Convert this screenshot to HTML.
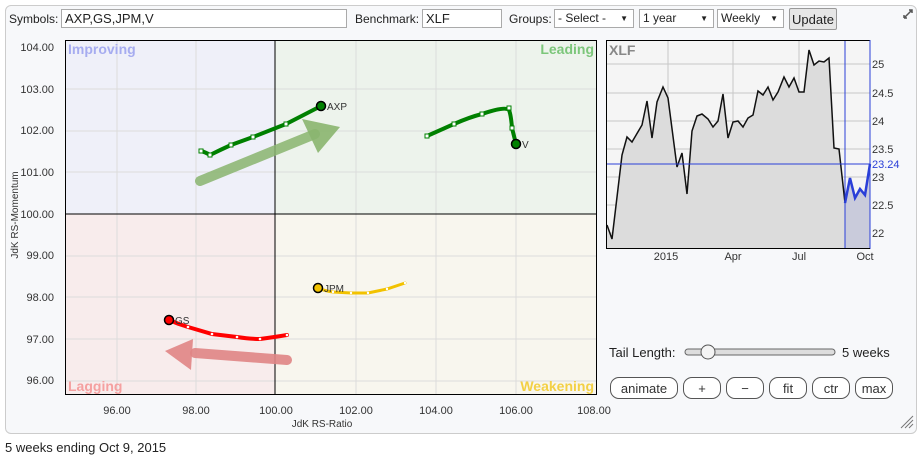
<!DOCTYPE html>
<html><head><meta charset="utf-8"><style>
body{margin:0;width:923px;height:456px;background:#fff;font-family:"Liberation Sans",Arial,sans-serif;font-size:12px;color:#222;position:relative;overflow:hidden}
.box{position:absolute;left:5px;top:5px;width:910px;height:427px;border:1px solid #ccc;border-radius:6px;background:#f7f8fa}
.a{position:absolute}
.inp{position:absolute;height:19px;border:1px solid #aaa;background:#fff;font-size:13px;line-height:17px;padding-left:3px;box-sizing:border-box}
.sel{position:absolute;height:19px;border:1px solid #aaa;background:#fff;font-size:12px;line-height:17px;padding-left:3px;box-sizing:border-box}
.sel:after{content:"▼";position:absolute;right:5px;font-size:8px}
.btn{position:absolute;top:377px;height:22px;border:1px solid #555;border-radius:9px;background:#fff;font-size:13px;text-align:center;line-height:21px;box-sizing:border-box;color:#333}
</style></head><body>
<div class="box"></div>
<div class="a" style="left:9px;top:12px;font-size:12px">Symbols:</div>
<div class="inp" style="left:61px;top:9px;width:286px">AXP,GS,JPM,V</div>
<div class="a" style="left:355px;top:12px;font-size:12px">Benchmark:</div>
<div class="inp" style="left:422px;top:9px;width:80px">XLF</div>
<div class="a" style="left:509px;top:12px;font-size:12px">Groups:</div>
<div class="sel" style="left:554px;top:9px;width:80px">- Select -</div>
<div class="sel" style="left:639px;top:9px;width:75px">1 year</div>
<div class="sel" style="left:717px;top:9px;width:67px">Weekly</div>
<div class="a" style="left:789px;top:8px;width:48px;height:22px;border:1px solid #999;background:#e6e6e6;font-size:13px;line-height:21px;text-align:center;box-sizing:border-box;border-radius:2px">Update</div>
<svg class="a" style="left:0;top:0" width="923" height="456">
<path d="M904 18l8-8M909 10h3v3M904 18v-3M904 18h3" stroke="#555" stroke-width="1.5" fill="none"/>
<g font-size="11" fill="#333" text-anchor="end">
<text x="54" y="51">104.00</text><text x="54" y="93">103.00</text><text x="54" y="134">102.00</text><text x="54" y="176">101.00</text><text x="54" y="218">100.00</text><text x="54" y="259">99.00</text><text x="54" y="301">98.00</text><text x="54" y="343">97.00</text><text x="54" y="384">96.00</text>
</g>
<g font-size="11" fill="#333" text-anchor="middle">
<text x="117" y="414">96.00</text><text x="196" y="414">98.00</text><text x="276" y="414">100.00</text><text x="356" y="414">102.00</text><text x="436" y="414">104.00</text><text x="516" y="414">106.00</text><text x="594" y="414">108.00</text>
<text x="322" y="427" font-size="10">JdK RS-Ratio</text>
</g>
<text transform="translate(18,215) rotate(-90)" font-size="10" fill="#333" text-anchor="middle">JdK RS-Momentum</text>
<rect x="65" y="40" width="210" height="174" fill="#eff0f9"/>
<rect x="275" y="40" width="322" height="174" fill="#edf3ec"/>
<rect x="65" y="214" width="210" height="181" fill="#f8ecec"/>
<rect x="275" y="214" width="322" height="181" fill="#f8f6ee"/>
<g stroke="#dcdcdc" stroke-width="1">
<path d="M117 40v355M196 40v355M356 40v355M436 40v355M516 40v355M65 89h532M65 131h532M65 172h532M65 256h532M65 297h532M65 339h532M65 381h532"/>
</g>
<rect x="65.5" y="40.5" width="531" height="354" fill="none" stroke="#000"/>
<path d="M275 40v355M65 214h532" stroke="#000"/>
<g font-size="14" font-weight="bold">
<text x="68" y="54" fill="#a6acf0">Improving</text>
<text x="594" y="54" fill="#7cc67a" text-anchor="end">Leading</text>
<text x="68" y="391" fill="#f5a0a0">Lagging</text>
<text x="594" y="391" fill="#f3d046" text-anchor="end">Weakening</text>
</g>
<path d="M200 181L315 134" stroke="#8ab56f" stroke-width="10" stroke-linecap="round" opacity=".85"/>
<path d="M340 127L302 119L318 153Z" fill="#8ab56f" opacity=".9"/>
<path d="M287 360L195 353" stroke="#e08585" stroke-width="10" stroke-linecap="round" opacity=".9"/>
<path d="M165 351L193 339L191 370Z" fill="#e08585" opacity=".9"/>
<g fill="none" stroke-width="4" stroke-linecap="round">
<path d="M201 151Q205 152 210 155Q220 150 231 145L253 137L286 124L321 106" stroke="#008000"/>
<path d="M427 136L454 124Q470 117 482 114Q505 106 509 110Q511 115 512 128L516 144" stroke="#008000"/>
<path d="M169 320Q178 324 188 327L212 334L237 337Q250 339 260 339Q275 337 287 335" stroke="#f00"/>
<path d="M318 288Q325 291 333 292L351 293L368 293L387 289L405 283" stroke="#f2c200" stroke-width="3"/>
</g>
<g fill="#fff" stroke="#008000" stroke-width="1">
<rect x="199" y="149" width="4" height="4"/><rect x="208" y="153" width="4" height="4"/><rect x="229" y="143" width="4" height="4"/><rect x="251" y="135" width="4" height="4"/><rect x="284" y="122" width="4" height="4"/>
<rect x="425" y="134" width="4" height="4"/><rect x="452" y="122" width="4" height="4"/><rect x="480" y="112" width="4" height="4"/><rect x="507" y="106" width="4" height="4"/><rect x="510" y="126" width="4" height="4"/>
</g>
<g fill="#fff"><circle cx="188" cy="327" r="1.3"/><circle cx="212" cy="334" r="1.3"/><circle cx="237" cy="337" r="1.3"/><circle cx="260" cy="339" r="1.3"/><circle cx="287" cy="335" r="1.3"/>
<circle cx="333" cy="292" r="1.2"/><circle cx="351" cy="293" r="1.2"/><circle cx="368" cy="293" r="1.2"/><circle cx="387" cy="289" r="1.2"/><circle cx="405" cy="283" r="1.2"/></g>
<circle cx="321" cy="106" r="4.5" fill="#008000" stroke="#000" stroke-width="1.5"/>
<circle cx="516" cy="144" r="4.5" fill="#008000" stroke="#000" stroke-width="1.5"/>
<circle cx="169" cy="320" r="4.5" fill="#f00" stroke="#000" stroke-width="1.5"/>
<circle cx="318" cy="288" r="4.5" fill="#f2c200" stroke="#000" stroke-width="1.5"/>
<g font-size="10" fill="#333"><text x="327" y="110">AXP</text><text x="522" y="148">V</text><text x="175" y="324">GS</text><text x="324" y="292">JPM</text></g>
<rect x="606" y="40" width="264" height="209" fill="#f5f5f5"/>
<g stroke="#c8c8c8"><path d="M668 40v209M733 40v209M799 40v209M606 64h264M606 93h264M606 121h264M606 149h264M606 177h264M606 205h264M606 233h264"/></g>
<path d="M607 225L612 239L622 155L627 137L632 142L642 125L647 101L652 138L657 102L663 87L668 98L677 167L682 153L687 194L692 131L697 116L702 114L708 119L713 127L718 121L723 94L728 138L733 122L738 121L743 127L748 118L753 115L758 91L763 95L768 87L773 100L778 92L784 77L789 87L794 78L799 92L804 92L809 50L814 65L819 61L824 62L829 58L834 148L839 149L845 203L845 249L607 249Z" fill="#dcdcdc"/>
<path d="M845 203L850 178L855 198L860 189L865 195L870 164L870 249L845 249Z" fill="#c9cbdb"/>
<path d="M607 225L612 239L622 155L627 137L632 142L642 125L647 101L652 138L657 102L663 87L668 98L677 167L682 153L687 194L692 131L697 116L702 114L708 119L713 127L718 121L723 94L728 138L733 122L738 121L743 127L748 118L753 115L758 91L763 95L768 87L773 100L778 92L784 77L789 87L794 78L799 92L804 92L809 50L814 65L819 61L824 62L829 58L834 148L839 149L845 203" fill="none" stroke="#111" stroke-width="1.5"/>
<path d="M845 203L850 178L855 198L860 189L865 195L870 164" fill="none" stroke="#2a3fd8" stroke-width="2.5"/>
<path d="M845 40v209M606 164h264M870 40v209" stroke="#2a3fd8" stroke-width="1"/>
<path d="M606.5 40.5h263M606.5 40v209M606 248.5h264" stroke="#000" fill="none"/>
<text x="609" y="55" font-size="14" font-weight="bold" fill="#888">XLF</text>
<g font-size="11" fill="#333"><text x="872" y="68">25</text><text x="872" y="97">24.5</text><text x="872" y="125">24</text><text x="872" y="153">23.5</text><text x="872" y="181">23</text><text x="872" y="209">22.5</text><text x="872" y="237">22</text><text x="872" y="168" fill="#2a3fd8">23.24</text></g>
<g font-size="11" fill="#333" text-anchor="middle"><text x="666" y="260">2015</text><text x="733" y="260">Apr</text><text x="799" y="260">Jul</text><text x="865" y="260">Oct</text></g>
<text x="609" y="357" font-size="13" fill="#222">Tail Length:</text>
<rect x="685" y="349" width="150" height="6" rx="3" fill="#ddd" stroke="#666"/>
<circle cx="708" cy="352" r="7" fill="#f4f4f4" stroke="#555"/>
<text x="842" y="357" font-size="13" fill="#222">5 weeks</text>
<path d="M901 428l12-12M905 428l8-8M909 428l4-4" stroke="#777"/>
</svg>
<div class="btn" style="left:610px;width:68px">animate</div>
<div class="btn" style="left:683px;width:38px">+</div>
<div class="btn" style="left:726px;width:38px">−</div>
<div class="btn" style="left:769px;width:38px">fit</div>
<div class="btn" style="left:812px;width:38px">ctr</div>
<div class="btn" style="left:855px;width:38px">max</div>
<div class="a" style="left:5px;top:440px;font-size:13px">5 weeks ending Oct 9, 2015</div>
</body></html>
